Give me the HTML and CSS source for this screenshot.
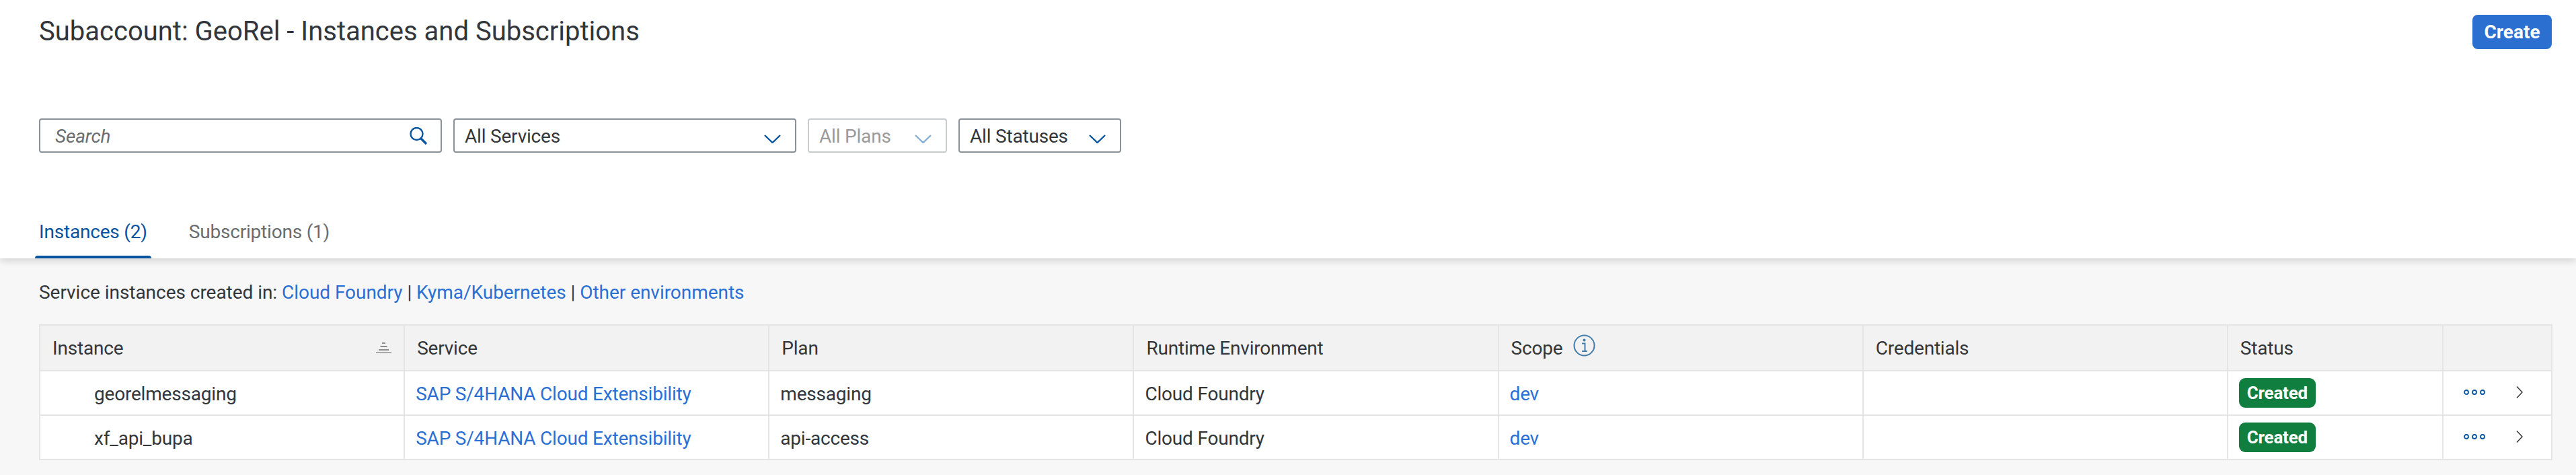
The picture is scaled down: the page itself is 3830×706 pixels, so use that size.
FILE: index.html
```html
<!DOCTYPE html>
<html lang="en">
  <head>
    <meta charset="UTF-8" />
    <title>Instances and Subscriptions</title>
    <link rel="stylesheet" href="styles.css">
  </head>
  <body>
    <header class="page-header">
      <div class="title-row">
        <h1>Subaccount: GeoRel - Instances and Subscriptions</h1>
        <button class="create-btn">Create</button>
      </div>

      <div class="filters">
        <div class="field field-search">
          <span class="placeholder">Search</span>
          <svg class="search-icon" viewBox="0 0 29 26"><circle cx="11.5" cy="10" r="9" /><path d="M18 17l8 8" stroke-width="3.4" /></svg>
        </div>
        <div class="field field-services">
          <span>All Services</span>
          <svg class="chevron" viewBox="0 0 25 13"><path d="M1 1l11.5 11L24 1" /></svg>
        </div>
        <div class="field field-plans disabled">
          <span>All Plans</span>
          <svg class="chevron" viewBox="0 0 25 13"><path d="M1 1l11.5 11L24 1" /></svg>
        </div>
        <div class="field field-statuses">
          <span>All Statuses</span>
          <svg class="chevron" viewBox="0 0 25 13"><path d="M1 1l11.5 11L24 1" /></svg>
        </div>
      </div>

      <nav class="tabs">
        <a class="tab active">Instances (2)</a>
        <a class="tab">Subscriptions (1)</a>
      </nav>
    </header>

    <main class="content">
      <p class="env-links">
        Service instances created in: <a>Cloud Foundry</a> | <a>Kyma/Kubernetes</a> | <a>Other environments</a>
      </p>

      <table class="instances">
        <colgroup>
          <col class="col-std" />
          <col class="col-std" />
          <col class="col-std" />
          <col class="col-std" />
          <col class="col-std" />
          <col class="col-std" />
          <col class="col-status" />
          <col class="col-actions" />
        </colgroup>
        <thead>
          <tr>
            <th>
              <div class="th-sort">
                Instance
                <svg class="sort-icon" viewBox="0 0 23 16"><path d="M9 1h5M6.500 6h10M4 11h15M0 15.500h23" /></svg>
              </div>
            </th>
            <th>Service</th>
            <th>Plan</th>
            <th>Runtime Environment</th>
            <th>
              <div class="th-info">
                Scope
                <svg class="info-icon" viewBox="0 0 33 33"><circle cx="16.500" cy="16.500" r="15" /><path d="M13 13.500h4.500V25M13 25h8" /><circle class="dot" cx="16.500" cy="8.500" r="2" /></svg>
              </div>
            </th>
            <th>Credentials</th>
            <th>Status</th>
            <th></th>
          </tr>
        </thead>
        <tbody>
          <tr>
            <td class="cell-name">georelmessaging</td>
            <td><a>SAP S/4HANA Cloud Extensibility</a></td>
            <td>messaging</td>
            <td>Cloud Foundry</td>
            <td><a>dev</a></td>
            <td></td>
            <td><span class="badge">Created</span></td>
            <td>
              <div class="row-actions">
                <svg class="dots" viewBox="0 0 32 8"><circle cx="4" cy="4" r="3" /><circle cx="16" cy="4" r="3" /><circle cx="28" cy="4" r="3" /></svg>
                <svg class="nav-arrow" viewBox="0 0 10 18"><path d="M1 0.500l8 8.500-8 8.500" /></svg>
              </div>
            </td>
          </tr>
          <tr>
            <td class="cell-name">xf_api_bupa</td>
            <td><a>SAP S/4HANA Cloud Extensibility</a></td>
            <td>api-access</td>
            <td>Cloud Foundry</td>
            <td><a>dev</a></td>
            <td></td>
            <td><span class="badge">Created</span></td>
            <td>
              <div class="row-actions">
                <svg class="dots" viewBox="0 0 32 8"><circle cx="4" cy="4" r="3" /><circle cx="16" cy="4" r="3" /><circle cx="28" cy="4" r="3" /></svg>
                <svg class="nav-arrow" viewBox="0 0 10 18"><path d="M1 0.500l8 8.500-8 8.500" /></svg>
              </div>
            </td>
          </tr>
        </tbody>
      </table>
    </main>
  </body>
</html>
```

FILE: styles.css
```css
* {
  box-sizing: border-box;
}

html,
body {
  height: 100%;
}

body {
  margin: 0;
  display: flex;
  flex-direction: column;
  overflow: hidden;
  font-family: Roboto, "Liberation Sans", sans-serif;
  font-size: 28px;
  letter-spacing: -0.2px;
  color: #32363a;
  background: #f7f7f7;
}

a {
  color: #2a6fd4;
  text-decoration: none;
}

.page-header {
  position: relative;
  height: 384px;
  padding: 22px 36px 0 58px;
  background: #fff;
  box-shadow: 0 4px 10px rgba(0, 0, 0, 0.14);
}

.title-row {
  display: flex;
  justify-content: space-between;
  align-items: flex-start;
  height: 51px;
}

h1 {
  margin: 0;
  font-size: 40px;
  font-weight: 400;
  line-height: 50px;
  letter-spacing: 0;
}

.create-btn {
  width: 118px;
  height: 51px;
  padding: 0;
  border: none;
  border-radius: 8px;
  background: #2b6fd1;
  color: #fff;
  font: 700 28px Roboto, sans-serif;
}

.filters {
  display: flex;
  gap: 17px;
  margin-top: 103px;
}

.field {
  display: flex;
  justify-content: space-between;
  align-items: center;
  height: 51px;
  padding: 2px 21px 0 15px;
  border: 2px solid #89919a;
  border-radius: 4px;
  background: #fff;
}

.field-search {
  width: 599px;
  padding: 2px 18px 0 22px;
}

.field-services {
  width: 510px;
}

.field-plans {
  width: 207px;
}

.field-statuses {
  width: 242px;
}

.placeholder {
  font-style: italic;
  color: #6a6d70;
}

.search-icon {
  width: 29px;
  height: 26px;
  margin-top: -2px;
  fill: none;
  stroke: #0854a0;
  stroke-width: 2.400;
}

.chevron {
  width: 25px;
  height: 13px;
  margin-top: 8px;
  fill: none;
  stroke: #0854a0;
  stroke-width: 2.400;
}

.disabled {
  border-color: #c8cccf;
  color: #9a9a9a;
}

.disabled .chevron {
  stroke: #83acd6;
}

.tabs {
  display: flex;
  gap: 50px;
  margin-top: 88px;
  margin-left: -6px;
}

.tab {
  position: relative;
  height: 69px;
  padding: 0 6px;
  color: #6a6d70;
  line-height: 60px;
}

.tab.active {
  color: #0854a0;
}

.tab.active::after {
  content: "";
  position: absolute;
  left: 0;
  right: 0;
  bottom: 0;
  height: 4px;
  border-radius: 4px 4px 0 0;
  background: #0854a0;
}

.content {
  flex: 1;
  padding: 0 35px 0 58px;
}

.env-links {
  margin: 34px 0 30px;
  height: 34px;
  line-height: 34px;
  letter-spacing: -0.04px;
}

.instances {
  width: 3737px;
  table-layout: fixed;
  border-collapse: collapse;
  background: #fff;
}

.col-std {
  width: 542px;
}

.col-status {
  width: 320px;
}

.col-actions {
  width: 162px;
}

th,
td {
  height: 66px;
  padding: 2px 0 0 16px;
  border: 2px solid #e5e5e5;
  text-align: left;
  font-weight: 400;
}

th {
  height: 68px;
  padding: 0 0 0 18px;
  background: #f2f2f2;
}

.th-sort {
  display: flex;
  justify-content: space-between;
  align-items: center;
  padding-right: 18px;
}

.th-info {
  display: flex;
  align-items: center;
  gap: 16px;
}

.sort-icon {
  width: 23px;
  height: 16px;
  fill: none;
  stroke: #8c8c8c;
  stroke-width: 2;
}

.info-icon {
  width: 33px;
  height: 33px;
  margin-top: -8px;
  fill: none;
  stroke: #427cac;
  stroke-width: 2;
}

.info-icon .dot {
  fill: #427cac;
  stroke: none;
}

.cell-name {
  padding-left: 80px;
}

.badge {
  display: block;
  width: 114px;
  height: 44px;
  margin-top: -2px;
  border-radius: 9px;
  background: #107e3e;
  color: #fff;
  font-size: 26px;
  font-weight: 700;
  line-height: 44px;
  text-align: center;
}

.row-actions {
  display: flex;
  align-items: center;
  gap: 46px;
  padding-left: 14px;
  margin-top: -4px;
}

.dots {
  width: 32px;
  height: 8px;
  fill: none;
  stroke: #0854a0;
  stroke-width: 1.800;
}

.nav-arrow {
  width: 10px;
  height: 18px;
  fill: none;
  stroke: #32363a;
  stroke-width: 1.500;
}
```
